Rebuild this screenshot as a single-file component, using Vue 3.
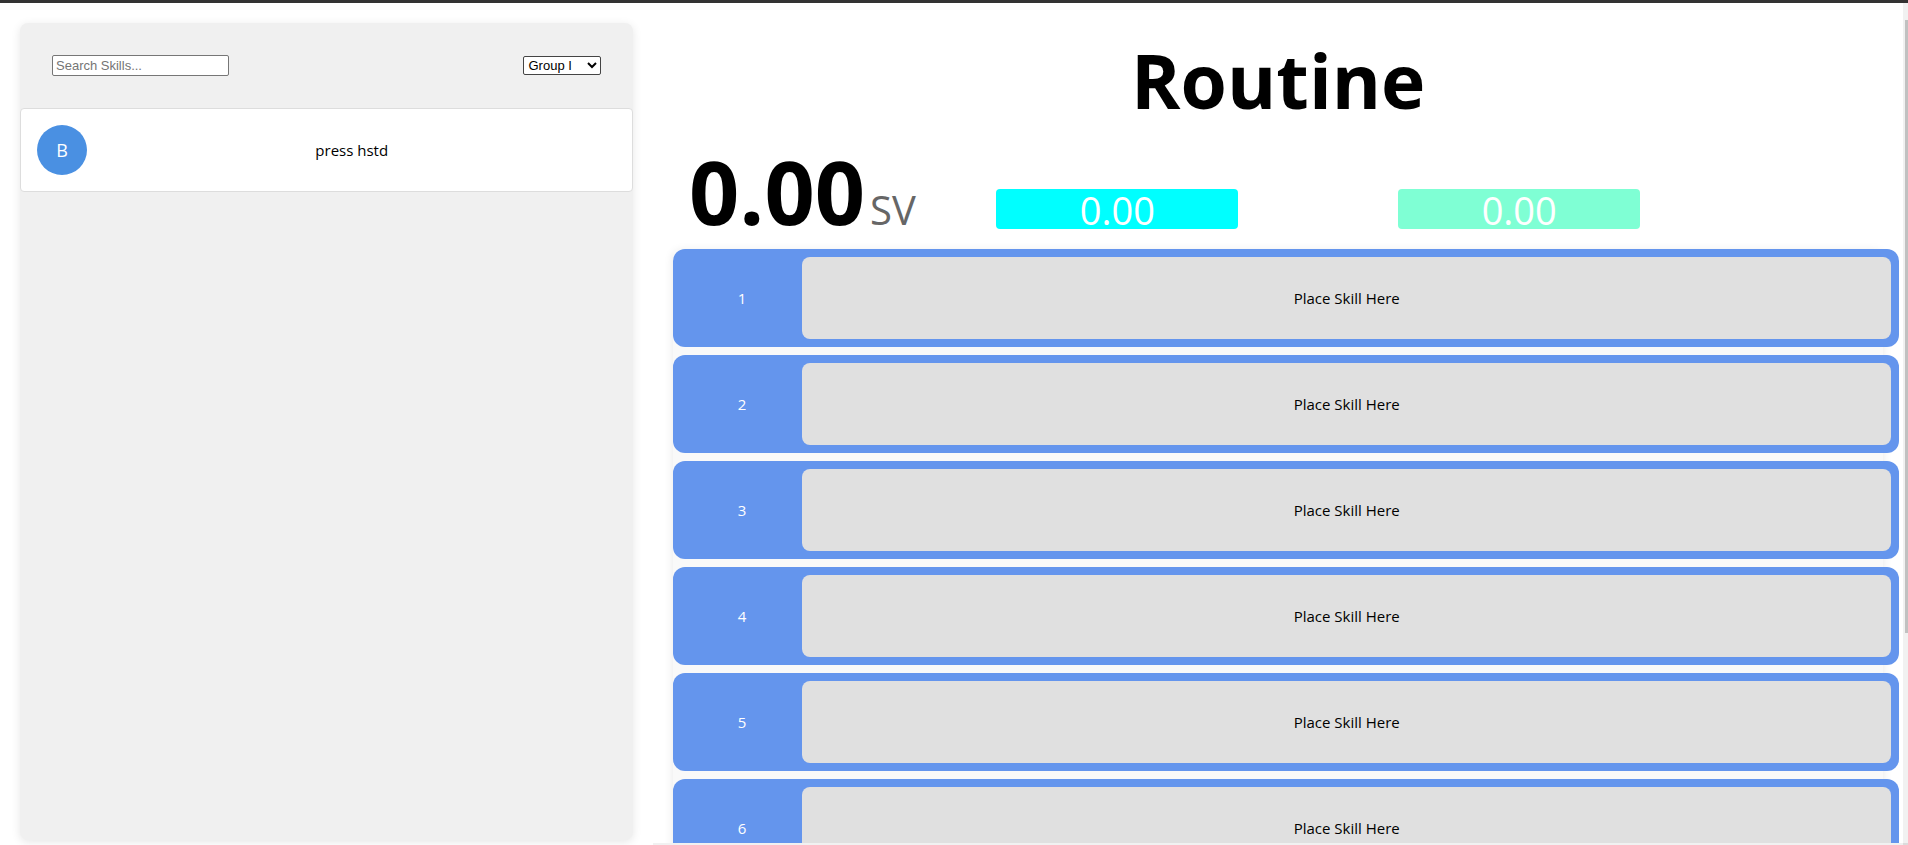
<script setup>
import { ref } from 'vue'

const search = ref('')
const group = ref('Group I')
const groups = ['Group I', 'Group II', 'Group III', 'Group IV']
const skills = [{ value: 'B', name: 'press hstd' }]
const slots = [1, 2, 3, 4, 5, 6]
</script>

<template>
  <div class="page">
    <div class="topbar"></div>
    <div class="columns">
      <aside class="library">
        <div class="filters">
          <input v-model="search" class="search" type="text" placeholder="Search Skills..." aria-label="Search Skills" />
          <select v-model="group" class="group" aria-label="Group">
            <option v-for="g in groups" :key="g">{{ g }}</option>
          </select>
        </div>
        <div v-for="s in skills" :key="s.name" class="skill">
          <span class="value">{{ s.value }}</span>
          <span class="name">{{ s.name }}</span>
        </div>
      </aside>
      <div class="pane">
        <main class="routine">
          <h1 class="title">Routine</h1>
          <div class="scores">
            <div class="start"><strong class="total">0.00</strong><span class="unit">SV</span></div>
            <div class="badge aqua">0.00</div>
            <div class="badge mint">0.00</div>
          </div>
          <div class="list">
            <div v-for="n in slots" :key="n" class="row">
              <span class="number">{{ n }}</span>
              <div class="slot">Place Skill Here</div>
            </div>
          </div>
        </main>
        <div class="rail"><div class="thumb"></div></div>
        <div class="floor"></div>
        <div class="corner"></div>
      </div>
    </div>
  </div>
</template>

<style>
body {
  margin: 0;
}
</style>

<style scoped>
.page {
  display: flex;
  flex-direction: column;
  height: 100vh;
  overflow: hidden;
  background: #fff;
  color: #000;
  font-family: 'Segoe UI', 'Open Sans', 'Noto Sans', sans-serif;
  font-size: 15px;
}
.topbar {
  flex: none;
  height: 3px;
  background: #333;
}
.columns {
  flex: 1;
  min-height: 0;
  display: flex;
}
.library {
  flex: 0 0 auto;
  box-sizing: border-box;
  width: calc(34.25% - 40px);
  margin: 20px 20px 5px;
  background: #f0f0f0;
  border-radius: 8px;
  box-shadow: 0 2px 10px rgba(0, 0, 0, 0.1);
}
.filters {
  display: flex;
  justify-content: space-between;
  align-items: center;
  height: 85px;
  box-sizing: border-box;
  padding: 0 32px;
}
.search,
.group {
  box-sizing: border-box;
  background: #fff;
  font: 13px 'Liberation Sans', Arial, sans-serif;
}
.search {
  width: 177px;
  height: 21px;
  padding: 1px 3px;
  border: 1px solid #767676;
  border-radius: 2px;
}
.search::placeholder {
  color: #757575;
}
.group {
  width: 78px;
  height: 19px;
  border: 1px solid #444;
  border-radius: 2px;
  color: #000;
}
.skill {
  display: flex;
  align-items: center;
  padding: 16px;
  background: #fff;
  border: 1px solid #ddd;
  border-radius: 4px;
}
.value {
  flex: none;
  width: 50px;
  height: 50px;
  border-radius: 50%;
  background: #4a90e2;
  color: #fff;
  font-size: 18px;
  line-height: 50px;
  text-align: center;
}
.name {
  flex: 1;
  text-align: center;
}
.pane {
  flex: 1;
  min-width: 0;
  display: grid;
  grid-template-columns: minmax(0, 1fr) 5px;
  grid-template-rows: minmax(0, 1fr) 2px;
}
.routine {
  overflow: hidden;
  padding: 0 20px;
}
.title {
  margin: 24px 0 0;
  font-size: 75px;
  line-height: 106px;
  font-weight: 700;
  text-align: center;
}
.scores {
  display: flex;
  align-items: flex-end;
  height: 96px;
  margin-bottom: 20px;
}
.start {
  display: flex;
  align-items: baseline;
  justify-content: center;
  box-sizing: border-box;
  width: 20%;
  padding-left: 16px;
  line-height: 38px;
  white-space: nowrap;
}
.total {
  font-size: 88px;
}
.unit {
  margin-left: 5px;
  font-size: 40px;
  color: #666;
}
.badge {
  width: 20%;
  height: 40px;
  margin-left: 81px;
  border-radius: 4px;
  color: #fff;
  font-size: 38px;
  line-height: 42px;
  text-align: center;
}
.badge + .badge {
  margin-left: 160px;
}
.aqua {
  background: #0ff;
}
.mint {
  background: #7fffd4;
}
.list {
  display: flex;
  flex-direction: column;
  gap: 8px;
  background: #f9f9f9;
  border-radius: 8px;
  box-shadow: 0 2px 10px rgba(0, 0, 0, 0.1);
}
.row {
  display: flex;
  align-items: center;
  height: 82px;
  margin-right: -16px;
  padding: 8px;
  background: #6495ed;
  border-radius: 12px;
}
.number {
  flex: 0 0 10%;
  color: #fff;
  text-align: center;
}
.slot {
  flex: 1;
  display: flex;
  align-items: center;
  justify-content: center;
  height: 100%;
  background: #e0e0e0;
  border-radius: 8px;
}
.rail {
  padding: 17px 0 0 2px;
  background: #f1f1f1;
}
.thumb {
  height: 74.5%;
  background: #c1c1c1;
}
.floor {
  background: #f1f1f1;
}
.corner {
  background: #dcdcdc;
}
</style>
